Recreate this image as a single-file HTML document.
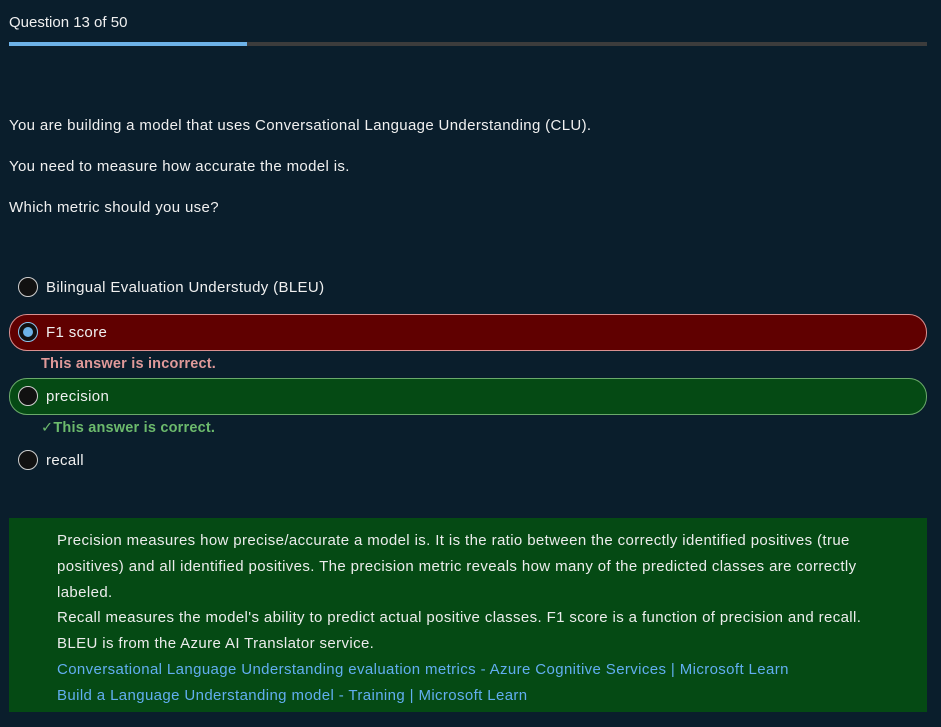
<!DOCTYPE html>
<html><head><style>
body{margin:0;width:941px;height:727px;background:#0a1e2c;color:#f0f0f0;font-family:"Liberation Sans",sans-serif;font-size:15px;letter-spacing:0.35px;position:relative;overflow:hidden}
.a{position:absolute;white-space:nowrap}
.radio{position:absolute;width:20px;height:20px;border:1.5px solid #cfcfcf;border-radius:50%;background:#111;box-sizing:border-box}
.box{position:absolute;left:9px;width:918px;border-radius:18px;box-sizing:border-box}
</style></head><body>
<div class="a" style="left:9px;top:14px;letter-spacing:0">Question 13 of 50</div>
<div style="position:absolute;left:9px;top:42px;width:918px;height:4px;background:#3c3c3c"></div>
<div style="position:absolute;left:9px;top:42px;width:238px;height:4px;background:#6db2e8"></div>
<div class="a" style="left:9px;top:117px">You are building a model that uses Conversational Language Understanding (CLU).</div>
<div class="a" style="left:9px;top:158px">You need to measure how accurate the model is.</div>
<div class="a" style="left:9px;top:199px">Which metric should you use?</div>

<div class="radio" style="left:18px;top:277px"></div>
<div class="a" style="left:46px;top:279px">Bilingual Evaluation Understudy (BLEU)</div>

<div class="box" style="top:314px;height:37px;background:#600000;border:1px solid #d99090"></div>
<div class="radio" style="left:18px;top:322px;border-color:#8cc4ee;background:#111"><div style="position:absolute;left:3.5px;top:3.5px;width:10px;height:10px;border-radius:50%;background:#6db2e8"></div></div>
<div class="a" style="left:46px;top:324px">F1 score</div>
<div class="a" style="left:41px;top:356px;color:#e09a9a;font-weight:bold;font-size:14.5px;letter-spacing:0.2px">This answer is incorrect.</div>

<div class="box" style="top:378px;height:37px;background:#054a14;border:1px solid #6aaa6a"></div>
<div class="radio" style="left:18px;top:386px"></div>
<div class="a" style="left:46px;top:388px">precision</div>
<div class="a" style="left:41px;top:420px;color:#6cba6c;font-weight:bold;font-size:14.5px;letter-spacing:0.2px"><span style="font-weight:normal">✓</span>This answer is correct.</div>

<div class="radio" style="left:18px;top:450px"></div>
<div class="a" style="left:46px;top:452px">recall</div>

<div style="position:absolute;left:9px;top:518px;width:918px;height:194px;background:#054a14"></div>
<div style="position:absolute;left:57px;top:528px;line-height:25.8px;color:#ececec;white-space:nowrap;letter-spacing:0.38px">
Precision measures how precise/accurate a model is. It is the ratio between the correctly identified positives (true<br>
positives) and all identified positives. The precision metric reveals how many of the predicted classes are correctly<br>
labeled.<br>
Recall measures the model's ability to predict actual positive classes. F1 score is a function of precision and recall.<br>
BLEU is from the Azure AI Translator service.<br>
<span style="color:#62aef0">Conversational Language Understanding evaluation metrics - Azure Cognitive Services | Microsoft Learn</span><br>
<span style="color:#62aef0">Build a Language Understanding model - Training | Microsoft Learn</span>
</div>
</body></html>
